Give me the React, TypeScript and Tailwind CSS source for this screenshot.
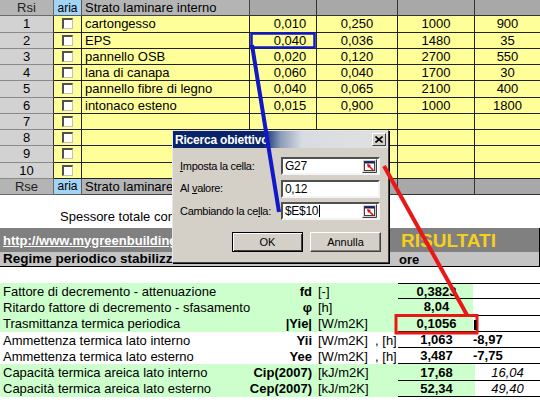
import React from 'react';

const COLS = 'grid grid-cols-[54px_28px_168px_67px_81px_77px_65px]';
const RCOLS = 'grid grid-cols-[255px_57px_86px_77px_65px]';

const layers = [
  ['cartongesso', '0,010', '0,250', '1000', '900'],
  ['EPS', '0,040', '0,036', '1480', '35'],
  ['pannello OSB', '0,020', '0,120', '2700', '550'],
  ['lana di canapa', '0,060', '0,040', '1700', '30'],
  ['pannello fibre di legno', '0,040', '0,065', '2100', '400'],
  ['intonaco esteno', '0,015', '0,900', '1000', '1800'],
  ['', '', '', '', ''],
  ['', '', '', '', ''],
  ['', '', '', '', ''],
  ['', '', '', '', ''],
];

type Result = {
  label: string;
  sym: string;
  unit: string;
  val: string;
  extra?: string;
  italic?: boolean;
  green: boolean;
};

const results: Result[] = [
  { label: 'Fattore di decremento - attenuazione', sym: 'fd', unit: '[-]', val: '0,3823', green: true },
  { label: 'Ritardo fattore di decremento - sfasamento', sym: 'φ', unit: '[h]', val: '8,04', green: true },
  { label: 'Trasmittanza termica periodica', sym: '|Yie|', unit: '[W/m2K]', val: '0,1056', green: true },
  { label: 'Ammettenza termica lato interno', sym: 'Yii', unit: '[W/m2K]  , [h]', val: '1,063', extra: '-8,97', green: false },
  { label: 'Ammettenza termica lato esterno', sym: 'Yee', unit: '[W/m2K]  , [h]', val: '3,487', extra: '-7,75', green: false },
  { label: 'Capacità termica areica lato interno', sym: 'Cip(2007)', unit: '[kJ/m2K]', val: '17,68', extra: '16,04', italic: true, green: true },
  { label: 'Capacità termica areica lato esterno', sym: 'Cep(2007)', unit: '[kJ/m2K]', val: '52,34', extra: '49,40', italic: true, green: true },
];

const Checkbox = () => (
  <span className="block w-[11px] h-[11px] bg-white border-t-2 border-l-2 border-[#505050] border-r border-b border-r-[#c0c0c0] border-b-[#c0c0c0] mt-[2px]" />
);

const RefIcon = () => (
  <svg width="15" height="14" viewBox="0 0 15 14" className="shrink-0">
    <rect x="0" y="0" width="15" height="14" fill="#d4d0c8" />
    <rect x="2.5" y="2.5" width="10" height="9" fill="#fff" stroke="#404040" />
    <rect x="2.5" y="2.5" width="10" height="2" fill="#0a246a" />
    <path d="M11 11 L6 6" stroke="#e01010" strokeWidth="1.6" />
    <path d="M5 5 L9 6 L6 9 Z" fill="#e01010" />
    <path d="M0.5 13.5 V0.5 H14.5" stroke="#fff" fill="none" />
    <path d="M0.5 13.5 H14.5 V0.5" stroke="#404040" fill="none" />
  </svg>
);

const Field = ({ value, icon, cursor }: { value: string; icon?: boolean; cursor?: boolean }) => (
  <div className="h-[18px] bg-white border-2 border-t-[#505050] border-l-[#505050] border-b-[#f4f4f4] border-r-[#f4f4f4] flex items-center pl-[2px] pr-[1px] text-[12px] text-black">
    <span className="flex-1 flex items-center">
      {value}
      {cursor && <span className="inline-block w-[1px] h-[12px] bg-black ml-[1px]" />}
    </span>
    {icon && <RefIcon />}
  </div>
);

const Dialog = () => (
  <div className="absolute left-[172px] top-[130px] w-[217px] bg-[#d4d0c8] border border-t-[#e8e8e8] border-l-[#e8e8e8] border-r-[#404040] border-b-[#404040] pb-[10px] shadow-[1px_1px_0_#000]">
    <div className="h-[17px] flex items-center justify-between pl-[2px] pr-[2px] bg-[linear-gradient(90deg,#0a246a_0%,#0a246a_42%,#8a9cb8_50%,#d8dce2_60%,#e0e0e0_100%)]">
      <span className="text-white font-bold text-[12px] tracking-[-0.2px]">Ricerca obiettivo</span>
      <span className="w-[14px] h-[13px] bg-[#d4d0c8] border border-t-white border-l-white border-r-[#404040] border-b-[#404040] flex items-center justify-center">
        <svg width="8" height="7" viewBox="0 0 8 7">
          <path d="M0.5 0.5 L7.5 6.5 M7.5 0.5 L0.5 6.5" stroke="#000" strokeWidth="1.6" />
        </svg>
      </span>
    </div>
    <div className="grid grid-cols-[101px_99px] gap-y-[4.5px] pl-[7px] pt-[9px] text-[11px] tracking-[-0.3px] text-black">
      <div className="flex items-center h-[18px]">
        <span>
          <span className="underline">I</span>mposta la cella:
        </span>
      </div>
      <Field value="G27" icon />
      <div className="flex items-center h-[18px]">
        <span>
          Al <span className="underline">v</span>alore:
        </span>
      </div>
      <Field value="0,12" />
      <div className="flex items-center h-[18px]">
        <span>
          Cambiando la ce<span className="underline">l</span>la:
        </span>
      </div>
      <Field value="$E$10" icon cursor />
    </div>
    <div className="flex justify-end gap-[7px] pr-[7px] pt-[12px] text-[11px] text-black">
      <button className="w-[71px] h-[20px] border border-black bg-[#d4d0c8] shadow-[inset_1px_1px_0_#fff,inset_-1px_-1px_0_#404040]">
        OK
      </button>
      <button className="w-[71px] h-[20px] bg-[#d4d0c8] border border-t-white border-l-white border-r-[#404040] border-b-[#404040] shadow-[inset_-1px_-1px_0_#808080]">
        Annulla
      </button>
    </div>
  </div>
);

const Overlay = () => (
  <svg className="absolute left-0 top-0 pointer-events-none" width="540" height="403" viewBox="0 0 540 403">
    <rect x="251.5" y="33.5" width="63" height="14" fill="none" stroke="#1018c8" strokeWidth="2.5" />
    <line x1="252" y1="45" x2="279" y2="212" stroke="#1018c8" strokeWidth="4" />
    <rect x="396" y="315.5" width="81" height="17.5" fill="none" stroke="#e81818" strokeWidth="3" />
    <line x1="384" y1="166" x2="467" y2="315" stroke="#e81818" strokeWidth="4" />
    <rect x="474" y="320" width="2.5" height="10" fill="#000" />
  </svg>
);

export default function App() {
  return (
    <div className="relative w-[540px] h-[403px] overflow-hidden bg-white text-[13px] leading-none text-black font-['Liberation_Sans',Arial,sans-serif]">
      {/* strati */}
      <div className={COLS + ' h-[16.25px]'}>
        <div className="bg-[#b4b4b4] border-r border-b border-[#6a6a6a] flex items-center justify-center text-[#222]">Rsi</div>
        <div className="bg-[#a2d4f6] border-r border-b border-[#5a5a5a] flex items-center justify-center text-[12px]">aria</div>
        <div className="bg-[#b4b4b4] border-r border-b border-[#444] flex items-center pl-[3px]">Strato laminare interno</div>
        <div className="bg-[#a8a8a8] border-r border-b border-[#333]" />
        <div className="bg-[#a8a8a8] border-r border-b border-[#333]" />
        <div className="bg-[#a8a8a8] border-r border-b border-[#333]" />
        <div className="bg-[#a8a8a8] border-b border-[#333]" />
      </div>
      {layers.map((l, i) => (
        <div key={i} className={COLS + ' h-[16.25px]'}>
          <div className="bg-[#d2d2d2] border-r border-r-[#333] border-b border-b-[#8a8a8a] flex items-center justify-center">{i + 1}</div>
          <div className="bg-[#ffff99] border-r border-b border-[#222] flex justify-center">
            <Checkbox />
          </div>
          <div className="bg-[#ffff99] border-r border-b border-[#222] flex items-center pl-[3px]">{l[0]}</div>
          <div className="bg-[#ffff99] border-r border-b border-[#222] flex items-center justify-center pl-[14px]">{l[1]}</div>
          <div className="bg-[#ffff99] border-r border-b border-[#222] flex items-center justify-center">{l[2]}</div>
          <div className="bg-[#ffff99] border-r border-b border-[#222] flex items-center justify-center">{l[3]}</div>
          <div className="bg-[#ffff99] border-b border-[#222] flex items-center justify-center">{l[4]}</div>
        </div>
      ))}
      <div className={COLS + ' h-[16.25px]'}>
        <div className="bg-[#b4b4b4] border-r border-b border-[#6a6a6a] flex items-center justify-center text-[#222]">Rse</div>
        <div className="bg-[#a2d4f6] border-r border-b border-[#5a5a5a] flex items-center justify-center text-[12px]">aria</div>
        <div className="bg-[#b4b4b4] border-r border-b border-[#444] flex items-center pl-[3px]">Strato laminare esterno</div>
        <div className="bg-[#a8a8a8] border-r border-b border-[#333]" />
        <div className="bg-[#a8a8a8] border-r border-b border-[#333]" />
        <div className="bg-[#a8a8a8] border-r border-b border-[#333]" />
        <div className="bg-[#a8a8a8] border-b border-[#333]" />
      </div>

      <div className="h-[33px] pt-[15px] pl-[60px]">Spessore totale componente</div>

      {/* risultati */}
      <div className="h-[24px] bg-[#808080] flex items-center justify-between pl-[3px] border-r border-black">
        <span className="text-white font-bold underline">http://www.mygreenbuilding.org</span>
        <span className="w-[138px] text-[#f5cf1c] font-bold text-[19px]">RISULTATI</span>
      </div>
      <div className="h-[15px] bg-[#c4c4c4] border-b border-r border-black flex items-center justify-between pl-[3px]">
        <span className="font-bold text-[13.5px]">Regime periodico stabilizzato</span>
        <span className="w-[140px] font-bold">ore</span>
      </div>
      <div className="h-[16px]" />
      {results.map((r, i) => {
        const bg = r.green ? 'bg-[#ccffcc]' : 'bg-white';
        return (
          <div key={i} className={RCOLS + ' h-[16.3px]'}>
            <div className={bg + ' flex items-center pl-[3px] whitespace-nowrap'}>{r.label}</div>
            <div className={bg + ' flex items-center justify-end font-bold whitespace-nowrap'}>{r.sym}</div>
            <div className={bg + ' flex items-center pl-[6px] whitespace-pre'}>{r.unit}</div>
            <div className={bg + ' flex items-center justify-center font-bold border-b border-black' + (i === 0 ? ' border-t' : '')}>{r.val}</div>
            <div className={'bg-white flex items-center border-b border-black' + (i === 0 ? ' border-t' : '') + (r.italic ? ' justify-center italic' : ' justify-start font-bold -ml-[2px]')}>
              {r.extra}
            </div>
          </div>
        );
      })}

      <Dialog />
      <Overlay />
    </div>
  );
}
